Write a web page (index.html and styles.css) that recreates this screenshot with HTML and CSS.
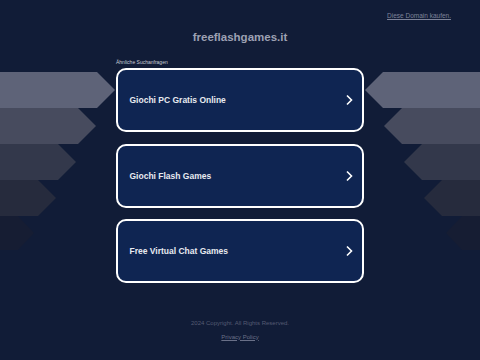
FILE: index.html
```html
<!DOCTYPE html>
<html lang="de">
<head>
<meta charset="utf-8">
<title>freeflashgames.it</title>
<link rel="stylesheet" href="styles.css">
</head>
<body>
<div class="decor" aria-hidden="true">
  <svg width="480" height="360" viewBox="0 0 480 360">
    <polygon points="0,72 97,72 115,90 97,108 0,108" fill="#5e6378"/>
    <polygon points="0,108 78,108 96,126 78,144 0,144" fill="#474b5e"/>
    <polygon points="0,144 58,144 76,162 58,180 0,180" fill="#33384b"/>
    <polygon points="0,180 38,180 56,198 38,216 0,216" fill="#262b3d"/>
    <polygon points="0,216 18,216 34,233 18,250 0,250" fill="#161d33"/>
    <polygon points="480,72 383,72 365,90 383,108 480,108" fill="#5e6378"/>
    <polygon points="480,108 402,108 384,126 402,144 480,144" fill="#474b5e"/>
    <polygon points="480,144 422,144 404,162 422,180 480,180" fill="#33384b"/>
    <polygon points="480,180 442,180 424,198 442,216 480,216" fill="#262b3d"/>
    <polygon points="480,216 462,216 446,233 462,250 480,250" fill="#161d33"/>
  </svg>
</div>
<div class="page">
  <header class="top">
    <a class="buy" href="#">Diese Domain kaufen.</a>
  </header>
  <h1 class="title">freeflashgames.it</h1>
  <main class="results">
    <div class="label">Ähnliche Suchanfragen</div>
    <div class="list">
      <a class="card" href="#"><span>Giochi PC Gratis Online</span><svg class="chev" width="8" height="12" viewBox="0 0 8 12"><path d="M2 1.5 L6.5 6 L2 10.5" fill="none" stroke="#ffffff" stroke-width="1.6"/></svg></a>
      <a class="card" href="#"><span>Giochi Flash Games</span><svg class="chev" width="8" height="12" viewBox="0 0 8 12"><path d="M2 1.5 L6.5 6 L2 10.5" fill="none" stroke="#ffffff" stroke-width="1.6"/></svg></a>
      <a class="card" href="#"><span>Free Virtual Chat Games</span><svg class="chev" width="8" height="12" viewBox="0 0 8 12"><path d="M2 1.5 L6.5 6 L2 10.5" fill="none" stroke="#ffffff" stroke-width="1.6"/></svg></a>
    </div>
  </main>
  <footer class="foot">
    <div class="copy">2024 Copyright. All Rights Reserved.</div>
    <a class="privacy" href="#">Privacy Policy</a>
  </footer>
</div>
</body>
</html>
```
FILE: styles.css
```css
html, body {
  margin: 0;
  padding: 0;
}
body {
  width: 480px;
  height: 360px;
  background: #111c37;
  font-family: "Liberation Sans", Arial, sans-serif;
  overflow: hidden;
  position: relative;
}
.decor {
  position: absolute;
  left: 0;
  top: 0;
  width: 480px;
  height: 360px;
}
.decor svg {
  display: block;
}
.page {
  position: relative;
  display: flex;
  flex-direction: column;
  align-items: center;
  height: 360px;
}
.top {
  align-self: stretch;
  display: flex;
  justify-content: flex-end;
  padding: 10px 29px 0 0;
  height: 11px;
}
.buy {
  font-size: 6.5px;
  line-height: 11px;
  color: #7d8399;
  text-decoration: underline;
}
.title {
  margin: 9px 0 0;
  font-size: 11.5px;
  line-height: 14px;
  font-weight: bold;
  color: #9da1b3;
}
.results {
  width: 248px;
  margin-top: 14.5px;
}
.label {
  font-size: 5px;
  line-height: 7px;
  color: #c9ccd6;
  margin-bottom: 2.5px;
}
.list {
  display: flex;
  flex-direction: column;
  gap: 11.5px;
}
.card {
  box-sizing: border-box;
  height: 64px;
  border: 2.5px solid #ffffff;
  border-radius: 10px;
  background: #0f2552;
  display: flex;
  align-items: center;
  justify-content: space-between;
  padding: 0 9px 0 11.5px;
  text-decoration: none;
  color: #e8eaf0;
  font-size: 8.5px;
  font-weight: bold;
}
.chev {
  display: block;
}
.foot {
  margin-top: 35.5px;
  display: flex;
  flex-direction: column;
  align-items: center;
  gap: 5px;
}
.copy {
  font-size: 6px;
  line-height: 9px;
  color: #555b73;
}
.privacy {
  font-size: 6px;
  line-height: 9px;
  color: #6a7088;
  text-decoration: underline;
}
```
